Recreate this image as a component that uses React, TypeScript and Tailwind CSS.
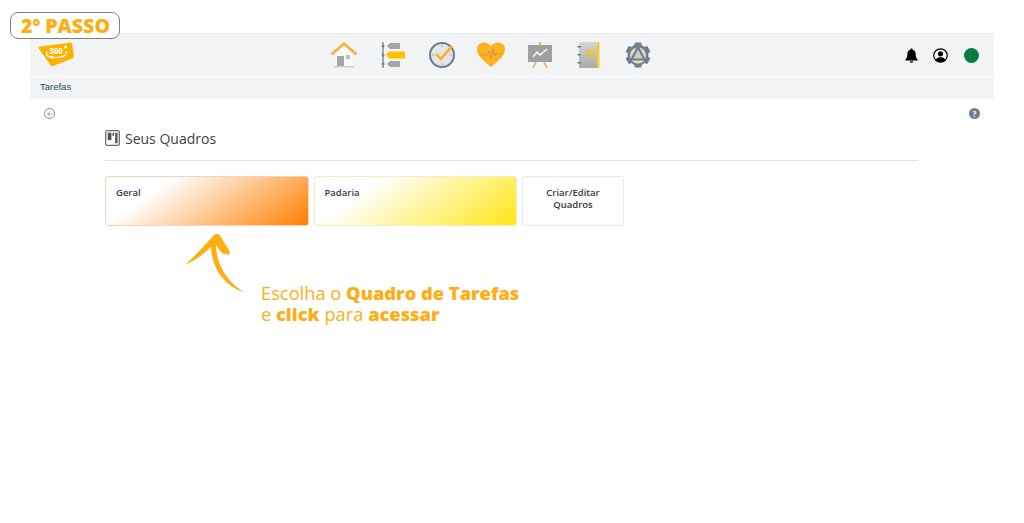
import React from 'react';
import { ArrowLeft } from 'lucide-react';

const openSans = { fontFamily: '"Open Sans", sans-serif' };

const Logo = () => (
  <svg width="38" height="26" viewBox="0 0 38 26">
    <path d="M1.5 4.5 L32 0.8 Q34 0.6 34.3 2.5 L35.8 14 Q36 15.8 34.3 16.5 L15 24 Q13.4 24.6 12.4 23 L0.8 6.5 Q0.2 4.8 1.5 4.5Z" fill="#ffb100" />
    <path d="M9 9.5 Q6 15.5 18 15.5 Q29 15.5 28.5 9" fill="none" stroke="#fff" strokeWidth="1.2" />
    <text x="18" y="12" textAnchor="middle" fontSize="8" fontWeight="700" fill="#fff" fontFamily="Open Sans">360</text>
    <circle cx="27.5" cy="5" r="1.5" fill="#fff" />
    <circle cx="14" cy="15.5" r="1.4" fill="#fff" />
  </svg>
);

const HomeIcon = () => (
  <svg width="28" height="28" viewBox="0 0 28 28">
    <path d="M6 13 L14 6 L22 13 V25 H6Z" fill="#f9f9f9" />
    <rect x="7" y="15" width="7" height="10" fill="#a5a5a5" />
    <rect x="16" y="14" width="4" height="4" fill="#bdbdbd" />
    <rect x="4" y="25" width="20" height="1.5" fill="#c5d3dc" />
    <path d="M1.5 13.5 L14 2.5 L26.5 13.5" fill="none" stroke="#fbb03b" strokeWidth="2.6" />
  </svg>
);

const GanttIcon = () => (
  <svg width="26" height="28" viewBox="0 0 26 28">
    <path d="M3 1 V27" stroke="#78858f" strokeWidth="1.4" />
    <circle cx="3" cy="5" r="1.5" fill="#78858f" />
    <circle cx="3" cy="14" r="1.5" fill="#78858f" />
    <circle cx="3" cy="23" r="1.5" fill="#78858f" />
    <path d="M7 5 L10 2 H20 V8 H10Z" fill="#a6a6a6" />
    <path d="M6 14 L9 10.5 H25 V17.5 H9Z" fill="#ffc000" />
    <path d="M7 23 L10 20 H20 V26 H10Z" fill="#a6a6a6" />
  </svg>
);

const ClockIcon = () => (
  <svg width="28" height="28" viewBox="0 0 28 28">
    <circle cx="14" cy="14" r="12" fill="#e3e5e7" stroke="#6b7b88" strokeWidth="2" />
    <path d="M14 4 V6 M14 22 V24 M4 14 H6 M22 14 H24" stroke="#a9b0b6" strokeWidth="1" />
    <path d="M8 13 L13 18 L24 5" fill="none" stroke="#fbb03b" strokeWidth="2.8" />
  </svg>
);

const HeartIcon = () => (
  <svg width="28" height="26" viewBox="0 0 28 26">
    <path d="M14 25 C6 18 0 14 0 7.5 C0 3 3.5 0.5 7 0.5 C10 0.5 12.5 2 14 4.5 C15.5 2 18 0.5 21 0.5 C24.5 0.5 28 3 28 7.5 C28 14 22 18 14 25Z" fill="#fdb11f" />
    <path d="M3 13 H10 L12 9 L14 17 L16 7 L18 14 L19 12 H25" fill="none" stroke="#c09a50" strokeWidth="1" />
  </svg>
);

const BoardIcon = () => (
  <svg width="26" height="28" viewBox="0 0 26 28">
    <rect x="12" y="1" width="2" height="4" fill="#fbb03b" />
    <path d="M9 21 L6 27 M17 21 L20 27" stroke="#fbb03b" strokeWidth="1.6" />
    <rect x="1" y="4" width="24" height="17" fill="#a0a0a0" />
    <path d="M6 16 L10 11 L13 14 L20 8" fill="none" stroke="#fff" strokeWidth="1.3" />
  </svg>
);

const NotebookIcon = () => (
  <svg width="24" height="28" viewBox="0 0 24 28">
    <defs>
      <linearGradient id="cover" x1="0" y1="0" x2="0" y2="1">
        <stop offset="0" stopColor="#d6d6d6" />
        <stop offset="1" stopColor="#a9a9a9" />
      </linearGradient>
    </defs>
    <rect x="2" y="1" width="20" height="26" rx="1.5" fill="url(#cover)" />
    <rect x="20" y="1" width="2.4" height="26" fill="#ffc91f" />
    <rect x="9" y="9" width="9" height="1.8" fill="#ffc000" />
    <rect x="9" y="13" width="9" height="1.8" fill="#ffc000" />
    <rect x="0.5" y="5" width="3.5" height="1.5" fill="#6b7b88" />
    <rect x="0.5" y="13" width="3.5" height="1.5" fill="#6b7b88" />
    <rect x="0.5" y="21" width="3.5" height="1.5" fill="#6b7b88" />
  </svg>
);

const GearIcon = () => (
  <svg width="26" height="26" viewBox="0 0 26 26">
    <circle cx="13" cy="13" r="10.5" fill="#6f7f8c" />
    <g fill="#6f7f8c">
      <rect x="9.5" y="0.5" width="7" height="5" rx="1" />
      <rect x="9.5" y="20.5" width="7" height="5" rx="1" />
      <rect x="9.5" y="0.5" width="7" height="5" rx="1" transform="rotate(60 13 13)" />
      <rect x="9.5" y="0.5" width="7" height="5" rx="1" transform="rotate(120 13 13)" />
      <rect x="9.5" y="0.5" width="7" height="5" rx="1" transform="rotate(240 13 13)" />
      <rect x="9.5" y="0.5" width="7" height="5" rx="1" transform="rotate(300 13 13)" />
    </g>
    <circle cx="13" cy="13.5" r="8" fill="#e8d9ae" />
    <path d="M13 5 L19.5 17.5 H6.5Z" fill="#c9ced2" stroke="#6f7f8c" strokeWidth="2.2" strokeLinejoin="round" />
  </svg>
);

const BellIcon = () => (
  <svg width="13" height="15" viewBox="0 0 13 15">
    <path d="M6.5 0.5 C7.2 0.5 7.6 1 7.6 1.7 C9.8 2.2 10.6 4 10.6 6 C10.6 9 11.4 10.3 12.6 11.6 V12.4 H0.4 V11.6 C1.6 10.3 2.4 9 2.4 6 C2.4 4 3.2 2.2 5.4 1.7 C5.4 1 5.8 0.5 6.5 0.5Z" fill="#000" />
    <path d="M4.8 13.2 H8.2 C8 14.2 7.3 14.8 6.5 14.8 C5.7 14.8 5 14.2 4.8 13.2Z" fill="#000" />
  </svg>
);

const UserIcon = () => (
  <svg width="15" height="15" viewBox="0 0 15 15">
    <circle cx="7.5" cy="7.5" r="6.7" fill="#fff" stroke="#000" strokeWidth="1.2" />
    <circle cx="7.5" cy="5.8" r="2.6" fill="#000" />
    <path d="M2.8 12 C3.5 9.8 5.5 9.3 7.5 9.3 C9.5 9.3 11.5 9.8 12.2 12 C11 13.4 9.3 14 7.5 14 C5.7 14 4 13.4 2.8 12Z" fill="#000" />
  </svg>
);

const BoardsIcon = () => (
  <svg width="15" height="16" viewBox="0 0 14 15">
    <rect x="0.6" y="0.6" width="12.8" height="13.8" rx="1.5" fill="#fff" stroke="#6d6d6d" strokeWidth="1.2" />
    <rect x="2.5" y="2.5" width="3.5" height="7" fill="#555" />
    <rect x="7" y="2.5" width="1.5" height="3" fill="#555" />
    <rect x="9.5" y="2.5" width="2.2" height="10" fill="#555" />
  </svg>
);

const Arrow = () => (
  <svg width="62" height="62" viewBox="0 0 62 62">
    <path d="M1 33 C10 25 20 14 30 3 C33 1 36 2 37 5 C40 10 43 15 46 20 L45 23 L38 21 C35 18 33 14 32 13 C32 30 42 50 60 60 C42 55 28 38 27 15 C20 22 10 29 1 33Z" fill="#fdae14" />
  </svg>
);

export default function App() {
  const navIcons = [
    <HomeIcon key="home" />,
    <GanttIcon key="gantt" />,
    <ClockIcon key="clock" />,
    <HeartIcon key="heart" />,
    <BoardIcon key="board" />,
    <NotebookIcon key="notebook" />,
    <GearIcon key="gear" />,
  ];

  return (
    <div className="relative h-[523px] w-[1024px] overflow-hidden bg-white px-[30px] pt-[33px]" style={openSans}>
      {/* step badge */}
      <div className="absolute left-[10px] top-[12px] z-10 flex h-[27px] w-[110px] items-center justify-center rounded-[8px] border-[1.5px] border-[#7f7f7f] bg-white pl-[1px] text-[19.6px] font-extrabold text-[#fdae14]">
        2º PASSO
      </div>

      <nav className="relative flex h-[44px] items-center border-t border-b border-[#e9ebed] border-b-white bg-[#f1f3f5]">
        <div className="absolute left-[8px] top-[8px]">
          <Logo />
        </div>
        <div className="ml-[289px] flex items-center">
          {navIcons.map((icon, i) => (
            <div key={i} className="flex w-[49px] justify-center">
              {icon}
            </div>
          ))}
        </div>
        <div className="ml-auto mr-[15px] flex items-center gap-[15px]">
          <BellIcon />
          <UserIcon />
          <span className="ml-[1px] h-[15px] w-[15px] rounded-full bg-[#077d3f]" />
        </div>
      </nav>

      <div className="flex h-[22px] items-center bg-[#f1f3f5] pb-[2px] pl-[10px] text-[9.5px] text-[#1f4a5c]" style={{ fontFamily: '"Liberation Sans", sans-serif' }}>
        Tarefas
      </div>

      <div className="flex items-center justify-between pl-[14px] pr-[14px] pt-[9px]">
        <span className="flex h-[11px] w-[11px] items-center justify-center rounded-full border border-[#8b8f93]">
          <ArrowLeft size={8} color="#777b80" strokeWidth={2} />
        </span>
        <span className="flex h-[11px] w-[11px] items-center justify-center rounded-full bg-[#6c7d8c] text-[8px] font-bold leading-none text-white">
          ?
        </span>
      </div>

      <div className="ml-[75px] mr-[76px] mt-[10px]">
        <div className="flex h-[32px] items-start gap-[5px] border-b border-[#e2e3e4]">
          <span className="mt-[1px]"><BoardsIcon /></span>
          <h1 className="text-[14px] leading-[20px] text-[#3b4249]">Seus Quadros</h1>
        </div>

        <div className="mt-[15px] flex gap-[5px] text-[9.5px] font-semibold leading-[12px] text-[#343a40]">
          <div className="h-[50px] w-[204px] rounded-[3px] border border-[#f6d3b8] bg-[linear-gradient(145deg,#ffffff_25%,#ff7f00)] px-[10px] pt-[10px]">
            Geral
          </div>
          <div className="h-[50px] w-[203px] rounded-[3px] border border-[#f3ecc4] bg-[linear-gradient(145deg,#ffffff_25%,#ffe714)] px-[9.5px] pt-[10px]">
            Padaria
          </div>
          <div className="h-[50px] w-[102px] rounded-[3px] border border-[#e9eaeb] bg-white pt-[10px] text-center">
            Criar/Editar
            <br />
            Quadros
          </div>
        </div>
      </div>

      {/* annotation */}
      <div className="absolute left-[184px] top-[232px]">
        <Arrow />
      </div>
      <div className="absolute left-[261px] top-[282px] text-[18.3px] leading-[21px] text-[#fdae14]">
        Escolha o <b className="font-extrabold">Quadro de Tarefas</b>
        <br />
        e <b className="font-extrabold">click</b> para <b className="font-extrabold">acessar</b>
      </div>
    </div>
  );
}
